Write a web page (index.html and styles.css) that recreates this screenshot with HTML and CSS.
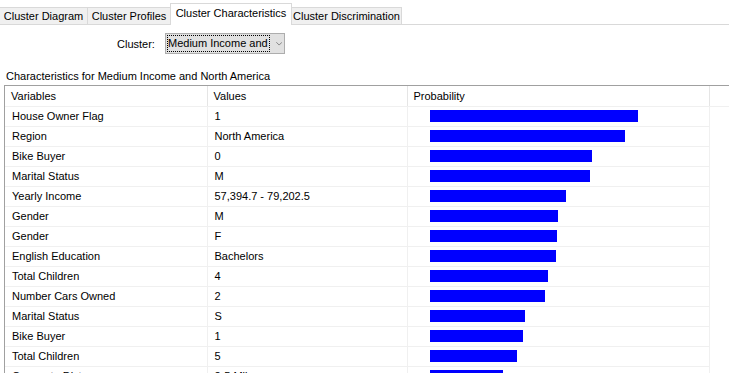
FILE: index.html
```html
<!DOCTYPE html>
<html lang="en">
<head>
    <meta charset="UTF-8">
    <title>Cluster Characteristics</title>
    <link rel="stylesheet" href="styles.css">
</head>
<body>
    <div class="tabs">
        <div class="tab tab-diagram">Cluster Diagram</div>
        <div class="tab tab-profiles">Cluster Profiles</div>
        <div class="tab tab-chars active">Cluster Characteristics</div>
        <div class="tab tab-discr">Cluster Discrimination</div>
    </div>

    <div class="filter">
        <span class="filter-label">Cluster:</span>
        <div class="select">
            <span class="select-text">Medium Income and</span>
            <svg class="select-arrow" width="9" height="6" viewBox="0 0 9 6">
                <polyline points="0.5,0.5 4.5,4.5 8.5,0.5" fill="none" stroke="#606060" stroke-width="1"/>
            </svg>
        </div>
    </div>

    <div class="caption">Characteristics for Medium Income and North America</div>

    <div class="listview">
        <table class="grid">
            <thead>
                <tr>
                    <th class="col-var">Variables</th>
                    <th class="col-val">Values</th>
                    <th class="col-prob">Probability</th>
                    <th class="col-fill"></th>
                </tr>
            </thead>
            <tbody>
                <tr><td>House Owner Flag</td><td>1</td><td><div class="bar" style="width:208px"></div></td><td></td></tr>
                <tr><td>Region</td><td>North America</td><td><div class="bar" style="width:195px"></div></td><td></td></tr>
                <tr><td>Bike Buyer</td><td>0</td><td><div class="bar" style="width:162px"></div></td><td></td></tr>
                <tr><td>Marital Status</td><td>M</td><td><div class="bar" style="width:160px"></div></td><td></td></tr>
                <tr><td>Yearly Income</td><td>57,394.7 - 79,202.5</td><td><div class="bar" style="width:136px"></div></td><td></td></tr>
                <tr><td>Gender</td><td>M</td><td><div class="bar" style="width:128px"></div></td><td></td></tr>
                <tr><td>Gender</td><td>F</td><td><div class="bar" style="width:127px"></div></td><td></td></tr>
                <tr><td>English Education</td><td>Bachelors</td><td><div class="bar" style="width:126px"></div></td><td></td></tr>
                <tr><td>Total Children</td><td>4</td><td><div class="bar" style="width:118px"></div></td><td></td></tr>
                <tr><td>Number Cars Owned</td><td>2</td><td><div class="bar" style="width:115px"></div></td><td></td></tr>
                <tr><td>Marital Status</td><td>S</td><td><div class="bar" style="width:95px"></div></td><td></td></tr>
                <tr><td>Bike Buyer</td><td>1</td><td><div class="bar" style="width:93px"></div></td><td></td></tr>
                <tr><td>Total Children</td><td>5</td><td><div class="bar" style="width:87px"></div></td><td></td></tr>
                <tr><td>Commute Distance</td><td>2-5 Miles</td><td><div class="bar" style="width:73px"></div></td><td></td></tr>
            </tbody>
        </table>
    </div>
</body>
</html>
```

FILE: styles.css
```css
html, body {
    margin: 0;
    padding: 0;
    height: 100%;
    overflow: hidden;
}

body {
    background-color: #fff;
    color: #000;
    font-family: "Liberation Sans", Arial, sans-serif;
    font-size: 11px;
}

/* tab strip */
.tabs {
    display: flex;
    align-items: flex-end;
    height: 24px;
    border-bottom: 1px solid #d9d9d9;
}
.tab {
    box-sizing: border-box;
    height: 18px;
    line-height: 16px;
    margin-bottom: -1px;
    background-color: #f0f0f0;
    border: 1px solid #d9d9d9;
    border-left: none;
    text-align: center;
    white-space: nowrap;
}
.tab-diagram { width: 88px; }
.tab-profiles { width: 83px; }
.tab-chars { width: 122px; }
.tab-discr { width: 110px; }
.tab.active {
    height: 22px;
    line-height: 18px;
    background-color: #fff;
    border-left: 1px solid #d9d9d9;
    border-bottom: none;
    margin-left: -1px;
    position: relative;
}

/* cluster selector */
.filter {
    display: flex;
    align-items: center;
    height: 21px;
    margin-top: 8px;
    padding-left: 117px;
}
.filter-label {
    width: 48px;
}
.select {
    box-sizing: border-box;
    display: flex;
    align-items: center;
    width: 120px;
    height: 21px;
    background-color: #e1e1e1;
    border: 1px solid #adadad;
    padding: 0 2px;
}
.select-text {
    line-height: 13px;
    outline: 1px dotted #000;
    outline-offset: 0;
    padding: 1px 1px 1px 0;
    white-space: nowrap;
}
.select-arrow {
    margin-left: 7px;
}

.caption {
    margin-top: 15px;
    padding-left: 6px;
    height: 14px;
    line-height: 14px;
}

/* list view */
.listview {
    margin-top: 2px;
    margin-left: 4px;
    border-top: 1px solid #a0a0a0;
    border-left: 1px solid #a0a0a0;
}
.grid {
    border-collapse: collapse;
    width: 100%;
    table-layout: fixed;
}
.grid th,
.grid td {
    box-sizing: border-box;
    height: 20px;
    padding: 0 0 0 7px;
    border-bottom: 1px solid #f0f0f0;
    border-right: 1px solid #f0f0f0;
    text-align: left;
    font-weight: normal;
    white-space: nowrap;
    overflow: hidden;
}
.grid th {
    padding-left: 6px;
    border-right-color: #e5e5e5;
}
.grid .col-var { width: 202px; }
.grid .col-val { width: 200px; }
.grid .col-prob { width: 302px; }
.grid .col-fill { border-right: none; }
.grid td:last-child { border: none; }
.grid td:nth-child(3) {
    padding-left: 22px;
}
.bar {
    height: 12px;
    background-color: #0000ff;
}
```
